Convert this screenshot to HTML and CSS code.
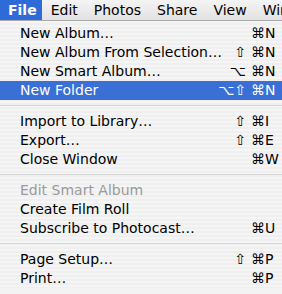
FILE: index.html
```html
<!DOCTYPE html>
<html lang="en">
<head>
  <meta charset="UTF-8">
  <title>File menu</title>
  <link rel="stylesheet" href="styles.css">
</head>
<body>
  <header class="menubar">
    <span class="bar-item active">File</span>
    <span class="bar-item">Edit</span>
    <span class="bar-item">Photos</span>
    <span class="bar-item">Share</span>
    <span class="bar-item">View</span>
    <span class="bar-item">Window</span>
  </header>

  <div class="menu">
    <div class="row"><span class="label">New Album…</span><span class="mods"></span><span class="key">⌘N</span></div>
    <div class="row"><span class="label">New Album From Selection…</span><span class="mods">⇧</span><span class="key">⌘N</span></div>
    <div class="row"><span class="label">New Smart Album…</span><span class="mods">⌥</span><span class="key">⌘N</span></div>
    <div class="row selected"><span class="label">New Folder</span><span class="mods">⌥⇧</span><span class="key">⌘N</span></div>
    <div class="sep"></div>
    <div class="row"><span class="label">Import to Library…</span><span class="mods">⇧</span><span class="key">⌘I</span></div>
    <div class="row"><span class="label">Export…</span><span class="mods">⇧</span><span class="key">⌘E</span></div>
    <div class="row"><span class="label">Close Window</span><span class="mods"></span><span class="key">⌘W</span></div>
    <div class="sep"></div>
    <div class="row disabled"><span class="label">Edit Smart Album</span></div>
    <div class="row"><span class="label">Create Film Roll</span></div>
    <div class="row"><span class="label">Subscribe to Photocast…</span><span class="mods"></span><span class="key">⌘U</span></div>
    <div class="sep"></div>
    <div class="row"><span class="label">Page Setup…</span><span class="mods">⇧</span><span class="key">⌘P</span></div>
    <div class="row"><span class="label">Print…</span><span class="mods"></span><span class="key">⌘P</span></div>
  </div>
</body>
</html>
```

FILE: styles.css
```css
/* Menu bar */
body {
  margin: 0;
  font-family: "DejaVu Sans", "Liberation Sans", sans-serif;
  font-size: 14px;
  color: #000;
  background-color: #f3f3f3;
  overflow: hidden;
}
.menubar {
  display: flex;
  height: 20px;
  line-height: 21px;
  background: linear-gradient(#f4f4f4, #e2e2e2);
  border-bottom: 1px solid #a8a8a8;
  white-space: nowrap;
}
.bar-item {
  padding: 0 8px;
}
.bar-item.active {
  padding: 0 5px 0 8px;
  margin-right: 1px;
  background-color: #2e6bd8;
  color: #fff;
  font-weight: bold;
}
/* Menu */
.menu {
  padding-top: 3px;
  background-color: #f4f4f4;
  background-image: repeating-linear-gradient(#f5f5f5 0, #f5f5f5 2px, #efefef 2px, #efefef 4px);
}
.row {
  display: flex;
  align-items: center;
  height: 19px;
  line-height: 21px;
  padding: 0 7px 0 20px;
  white-space: nowrap;
}
.row .label {
  flex: 1;
}
.row .mods {
  text-align: right;
  padding-right: 5px;
}
.row .key {
  width: 24px;
}
.row.selected {
  background-color: #3a6fd6;
  color: #fff;
}
.row.disabled {
  color: #9a9a9a;
}
.sep {
  height: 1px;
  margin: 5px 0 6px;
  background-color: #d6d6d6;
}
```
